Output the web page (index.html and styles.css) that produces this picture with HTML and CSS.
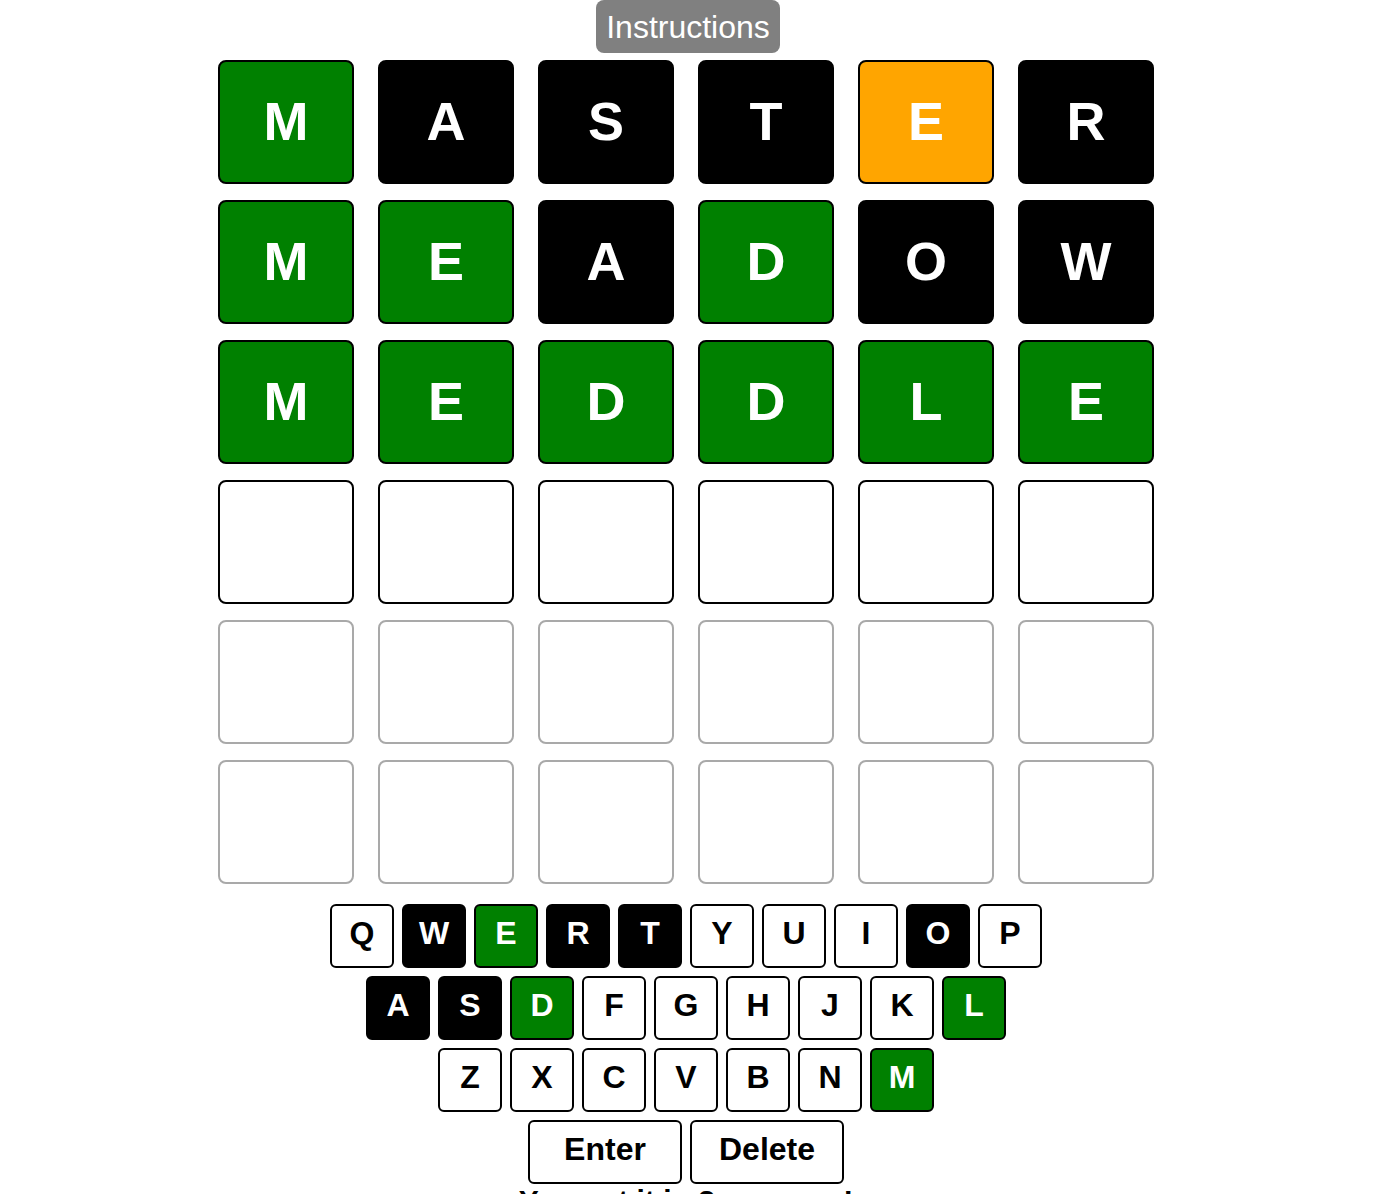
FILE: index.html
```html
<!DOCTYPE html>
<html>
<head>
<meta charset="utf-8">
<link rel="stylesheet" href="styles.css">
</head>
<body>
<div class="page">
  <button class="instructions">Instructions</button>
  <div class="board">
    <div class="tile green">M</div><div class="tile black">A</div><div class="tile black">S</div><div class="tile black">T</div><div class="tile orange">E</div><div class="tile black">R</div>
    <div class="tile green">M</div><div class="tile green">E</div><div class="tile black">A</div><div class="tile green">D</div><div class="tile black">O</div><div class="tile black">W</div>
    <div class="tile green">M</div><div class="tile green">E</div><div class="tile green">D</div><div class="tile green">D</div><div class="tile green">L</div><div class="tile green">E</div>
    <div class="tile current"></div><div class="tile current"></div><div class="tile current"></div><div class="tile current"></div><div class="tile current"></div><div class="tile current"></div>
    <div class="tile empty"></div><div class="tile empty"></div><div class="tile empty"></div><div class="tile empty"></div><div class="tile empty"></div><div class="tile empty"></div>
    <div class="tile empty"></div><div class="tile empty"></div><div class="tile empty"></div><div class="tile empty"></div><div class="tile empty"></div><div class="tile empty"></div>
  </div>
  <div class="keyboard">
    <div class="krow">
      <div class="key">Q</div><div class="key k-black">W</div><div class="key k-green">E</div><div class="key k-black">R</div><div class="key k-black">T</div><div class="key">Y</div><div class="key">U</div><div class="key">I</div><div class="key k-black">O</div><div class="key">P</div>
    </div>
    <div class="krow">
      <div class="key k-black">A</div><div class="key k-black">S</div><div class="key k-green">D</div><div class="key">F</div><div class="key">G</div><div class="key">H</div><div class="key">J</div><div class="key">K</div><div class="key k-green">L</div>
    </div>
    <div class="krow">
      <div class="key">Z</div><div class="key">X</div><div class="key">C</div><div class="key">V</div><div class="key">B</div><div class="key">N</div><div class="key k-green">M</div>
    </div>
    <div class="krow">
      <div class="key wide">Enter</div><div class="key wide">Delete</div>
    </div>
  </div>
  <div class="message">You got it in 3 guesses!</div>
</div>
</body>
</html>
```
FILE: styles.css
```css
html, body {
  margin: 0;
  padding: 0;
  background: #ffffff;
  font-family: "Liberation Sans", Arial, sans-serif;
}
.page {
  width: 1372px;
  display: flex;
  flex-direction: column;
  align-items: center;
}
.instructions {
  font-family: "Liberation Sans", Arial, sans-serif;
  font-size: 32px;
  height: 53px;
  padding: 2px 10px 0 10px;
  background: #808080;
  color: #ffffff;
  border: none;
  border-radius: 8px;
  margin: 0 0 7px 4px;
  line-height: 51px;
}
.board {
  display: grid;
  grid-template-columns: repeat(6, 136px);
  grid-auto-rows: 124px;
  column-gap: 24px;
  row-gap: 16px;
}
.tile {
  box-sizing: border-box;
  border: 2px solid #000;
  border-radius: 8px;
  display: flex;
  align-items: center;
  justify-content: center;
  font-weight: bold;
  font-size: 54px;
  padding-bottom: 2px;
  color: #fff;
}
.green { background: #008000; }
.black { background: #000; }
.orange { background: #ffa500; }
.current { background: #fff; border-color: #000; }
.empty { background: #fff; border-color: #a9a9a9; }
.keyboard {
  margin-top: 20px;
  display: flex;
  flex-direction: column;
  align-items: center;
  gap: 8px;
}
.krow {
  display: flex;
  gap: 8px;
}
.key {
  box-sizing: border-box;
  width: 64px;
  height: 64px;
  border: 2px solid #000;
  border-radius: 6px;
  background: #fff;
  color: #000;
  font-weight: bold;
  font-size: 32px;
  padding-bottom: 6px;
  display: flex;
  align-items: center;
  justify-content: center;
}
.key.wide { width: 154px; }
.k-black { background: #000; color: #fff; }
.k-green { background: #008000; color: #fff; }
.message {
  font-weight: bold;
  font-size: 30px;
  line-height: 34px;
  margin-top: 0;
  color: #000;
}
```
